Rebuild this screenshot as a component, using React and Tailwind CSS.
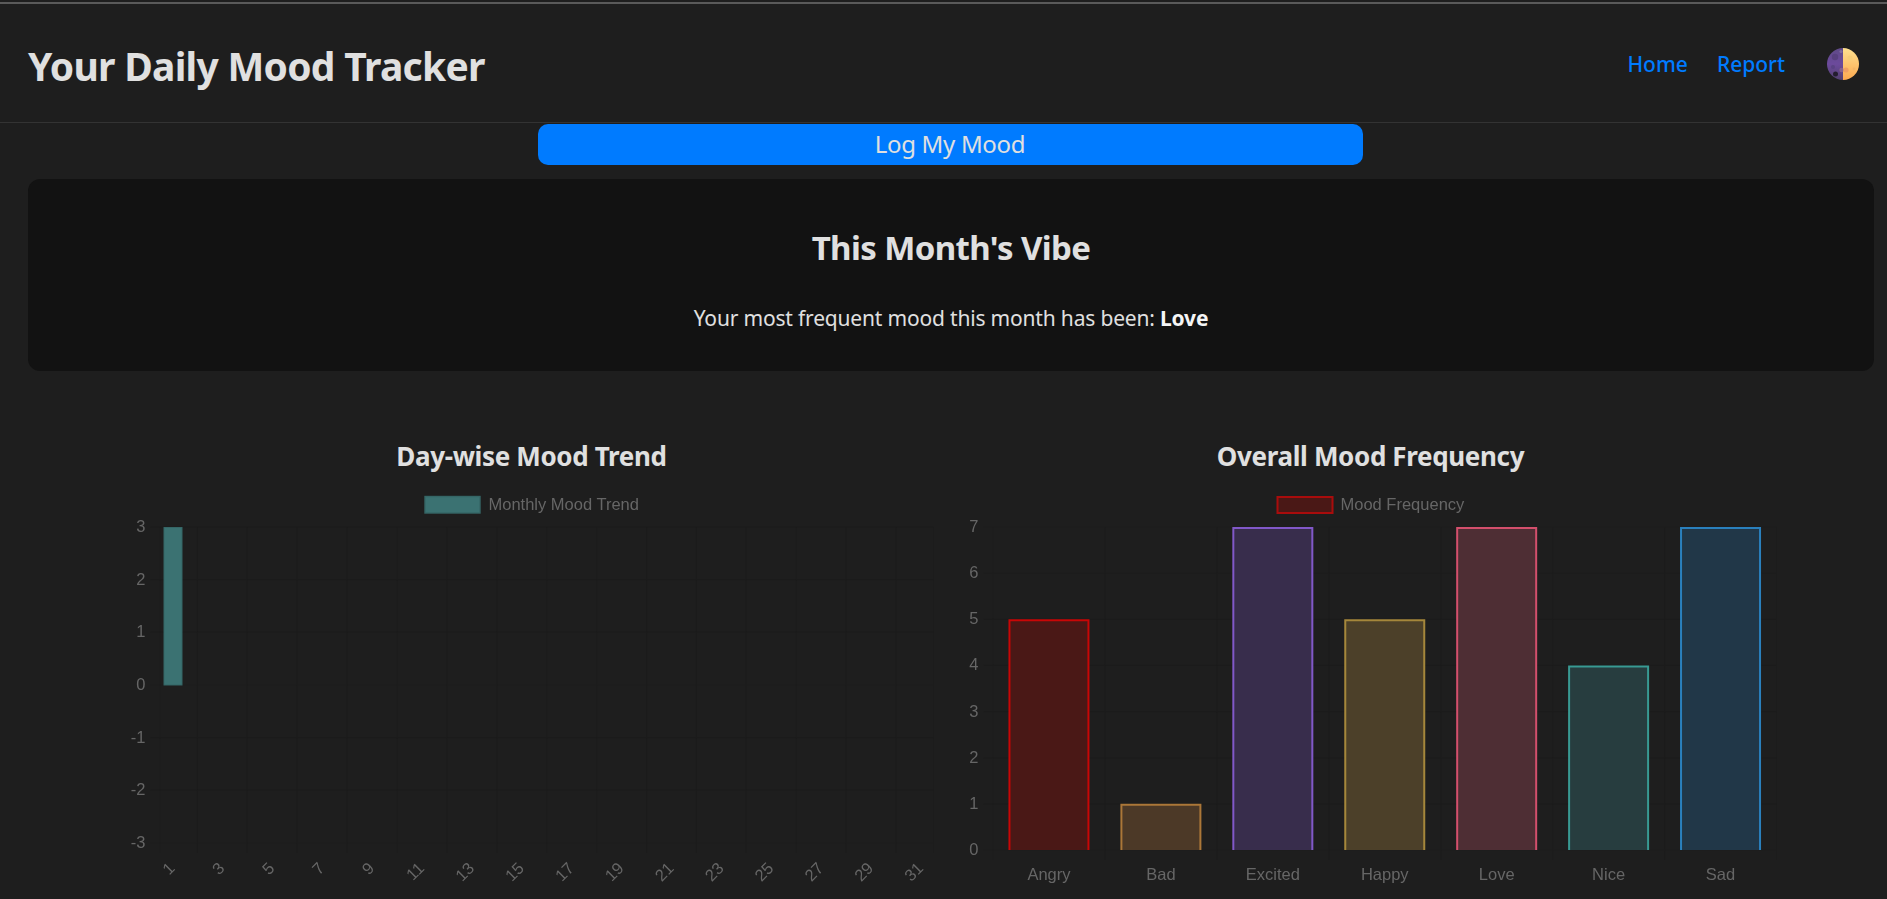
const ui = { fontFamily: '"Noto Sans", "Open Sans", sans-serif' };

const GRID = '#1c1c1c';
const TICK = '#666666';

function Moon() {
  return (
    <svg width="34" height="34" viewBox="0 0 34 34" className="block">
      <defs>
        <linearGradient id="moonL" x1="0" y1="0" x2="0" y2="1">
          <stop offset="0" stopColor="#5f4a86" />
          <stop offset="0.5" stopColor="#6c4a9c" />
          <stop offset="1" stopColor="#52406e" />
        </linearGradient>
        <linearGradient id="moonR" x1="0" y1="0" x2="0" y2="1">
          <stop offset="0" stopColor="#fee08f" />
          <stop offset="1" stopColor="#fca94f" />
        </linearGradient>
      </defs>
      <path d="M17 1 A16 16 0 0 0 17 33 Z" fill="url(#moonL)" />
      <path d="M17 1 A16 16 0 0 1 17 33 Z" fill="url(#moonR)" />
      <circle cx="9" cy="10" r="3.2" fill="#58407f" />
      <circle cx="15" cy="4.5" r="1.6" fill="#7f6a9e" />
      <circle cx="7" cy="20" r="2" fill="#5a4284" />
      <circle cx="9.5" cy="27" r="2.5" fill="#231d2e" />
      <circle cx="15.5" cy="23" r="2.2" fill="#85628f" />
      <circle cx="24" cy="11" r="2.6" fill="#f6cd78" />
      <circle cx="20" cy="23" r="2.6" fill="#f0a062" />
      <circle cx="28" cy="22" r="1.4" fill="#f3b566" />
    </svg>
  );
}

const tickProps = { fontFamily: '"Liberation Sans", Arial, sans-serif', fontSize: 16.5, fill: TICK };

function TrendChart() {
  const left = 159.5, right = 933, top = 527, cat = (right - left) / 31;
  const ys = [3, 2, 1, 0, -1, -2, -3];
  const yFor = (v) => 685 - v * 52.67;
  const labels = Array.from({ length: 16 }, (_, i) => 2 * i + 1);
  const gridX = [left, ...Array.from({ length: 15 }, (_, i) => left + cat * (1.5 + 2 * i)), right];
  return (
    <svg width="839" height="415" viewBox="111.5 484 839 415" className="block blur-[0.3px]">
      {gridX.map((x, i) => (
        <line key={i} x1={x} x2={x} y1={top} y2={853} stroke={GRID} strokeWidth="1" />
      ))}
      {ys.map((v) => (
        <line key={v} x1="150" x2={right} y1={yFor(v)} y2={yFor(v)} stroke={GRID} strokeWidth="1" />
      ))}
      {ys.map((v) => (
        <text key={v} x="145" y={yFor(v) - 1} textAnchor="end" dominantBaseline="central" {...tickProps}>{v}</text>
      ))}
      {labels.map((d) => {
        const c = left + cat * (d - 0.5) - 1;
        return (
          <text key={d} x={c} y="865" textAnchor="end" dominantBaseline="central" transform={`rotate(-45 ${c} 865)`} {...tickProps}>{d}</text>
        );
      })}
      <rect x="163.5" y="527.5" width="18" height="157.5" fill="#3b7272" stroke="#356666" strokeWidth="1" />
      <rect x="424.5" y="496.5" width="55" height="16.5" fill="#3b7272" stroke="#356666" strokeWidth="1.4" />
      <text x="488" y="504" dominantBaseline="central" {...tickProps}>Monthly Mood Trend</text>
    </svg>
  );
}

const moods = [
  { n: 'Angry', v: 5, s: '#c90606', f: '#4a1816' },
  { n: 'Bad', v: 1, s: '#ab7738', f: '#4c3927' },
  { n: 'Excited', v: 7, s: '#8158c8', f: '#382d4c' },
  { n: 'Happy', v: 5, s: '#a5873b', f: '#4c4029' },
  { n: 'Love', v: 7, s: '#d34f6c', f: '#4e2e34' },
  { n: 'Nice', v: 4, s: '#389a93', f: '#273d3f' },
  { n: 'Sad', v: 7, s: '#2a80bd', f: '#213748' },
];

function FrequencyChart() {
  const left = 992.5, right = 1776, top = 527, bottom = 850, cat = (right - left) / 7;
  const yFor = (v) => bottom - v * ((bottom - top) / 7);
  return (
    <svg width="839" height="415" viewBox="950.5 484 839 415" className="block blur-[0.3px]">
      {Array.from({ length: 8 }, (_, i) => (
        <line key={i} x1={left + cat * i} x2={left + cat * i} y1={top} y2="860" stroke={GRID} strokeWidth="1" />
      ))}
      {[0, 1, 2, 3, 4, 5, 6, 7].map((v) => (
        <line key={v} x1="983" x2={right} y1={yFor(v)} y2={yFor(v)} stroke={GRID} strokeWidth="1" />
      ))}
      {[0, 1, 2, 3, 4, 5, 6, 7].map((v) => (
        <text key={v} x="978" y={yFor(v) - 1} textAnchor="end" dominantBaseline="central" {...tickProps}>{v}</text>
      ))}
      {moods.map((m, i) => {
        const c = left + cat * (i + 0.5);
        const l = c - 39.5, r = c + 39.5, t = yFor(m.v) + 1;
        return (
          <g key={m.n}>
            <rect x={l} y={t} width={r - l} height={bottom - t} fill={m.f} />
            <path d={`M${l} ${bottom} V${t} H${r} V${bottom}`} fill="none" stroke={m.s} strokeWidth="2" />
            <text x={c} y="874" textAnchor="middle" dominantBaseline="central" {...tickProps}>{m.n}</text>
          </g>
        );
      })}
      <rect x="1277" y="497" width="55" height="16" fill="#4a1816" stroke="#a90c0c" strokeWidth="2" />
      <text x="1340" y="504" dominantBaseline="central" {...tickProps}>Mood Frequency</text>
    </svg>
  );
}

function ChartPanel({ title, children }) {
  return (
    <section className="w-[839px] shrink-0 flex flex-col items-center">
      <h3 className="text-[26px] leading-8 font-bold text-[#e0e0e0] tracking-[-0.35px]">{title}</h3>
      <div className="mt-3">{children}</div>
    </section>
  );
}

export default function App() {
  return (
    <div style={ui} className="h-[899px] w-full overflow-hidden bg-[#1e1e1e] text-[#e0e0e0]">
      <div className="h-[2px] mt-[2px] bg-[#5a5a5a]" />
      <header className="h-[119px] border-b border-[#333333] px-7 flex items-center justify-between">
        <h1 className="mt-[5px] text-[39px] leading-none font-bold tracking-[-0.72px]">Your Daily Mood Tracker</h1>
        <nav className="mt-[2px] -mr-px flex items-center">
          <a className="mt-[2px] text-[21px] font-medium text-[#007bff]">Home</a>
          <a className="mt-[2px] ml-[29px] text-[21px] font-medium text-[#007bff]">Report</a>
          <span className="ml-[41px]"><Moon /></span>
        </nav>
      </header>
      <main className="w-[1902px] px-7 flex flex-col items-center">
        <button className="mt-px mr-[2px] w-[825px] h-[41px] rounded-[10px] bg-[#007bff] text-[24px] leading-none text-[#e0e0e0] tracking-[-0.33px] pb-[2px]">Log My Mood</button>
        <section className="mt-[14px] w-full h-[192px] rounded-xl bg-[#121212] flex flex-col items-center">
          <h2 className="mt-[49px] text-[33px] leading-10 font-bold tracking-[-0.6px]">This Month's Vibe</h2>
          <p className="mt-[36px] text-[21px] leading-7 tracking-[-0.18px]">
            Your most frequent mood this month has been: <strong className="font-bold text-[#f5f5f5]">Love</strong>
          </p>
        </section>
        <div className="mt-[69px] flex justify-center w-full">
          <ChartPanel title="Day-wise Mood Trend"><TrendChart /></ChartPanel>
          <ChartPanel title="Overall Mood Frequency"><FrequencyChart /></ChartPanel>
        </div>
      </main>
    </div>
  );
}
